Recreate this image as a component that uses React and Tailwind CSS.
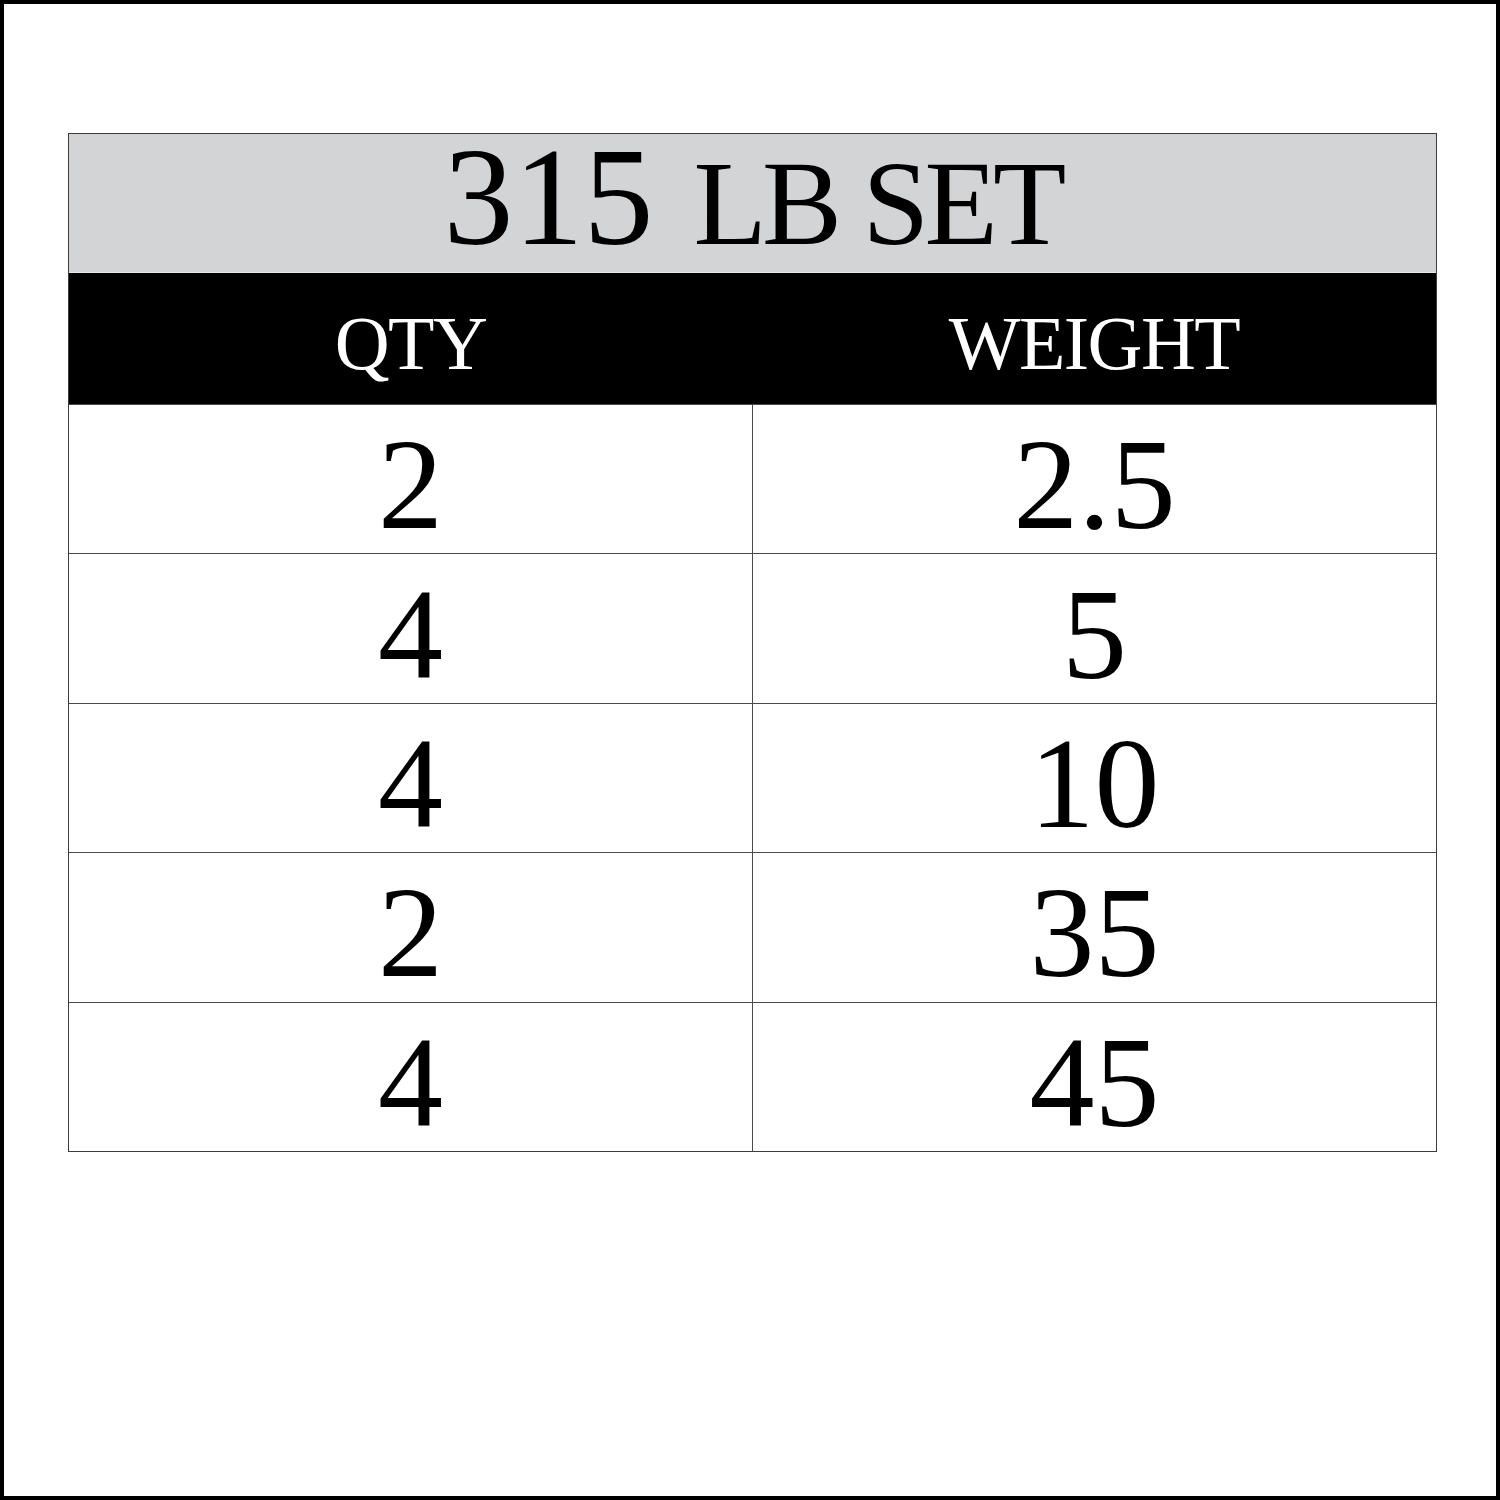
// Plate set table - 315 lb
const rows = [
  { qty: "2", weight: "2.5" },
  { qty: "4", weight: "5" },
  { qty: "4", weight: "10" },
  { qty: "2", weight: "35" },
  { qty: "4", weight: "45" },
];

export default function App() {
  return (
    <div className="w-[1500px] h-[1500px] bg-white border-[4px] border-black pt-[129px] pl-[64px] font-['Liberation_Serif',serif] text-black">
      <div className="w-[1369px] border border-[#3c3c3c]">
        {/* Title */}
        <div className="h-[139px] bg-[#d3d4d6] flex items-center justify-center pb-[12px] border-b border-[#e8e8e8]">
          <div className="flex items-baseline leading-none">
            <span className="text-[140px]">315</span>
            <span className="text-[120px] ml-[40px] tracking-[-0.04em]">LB SET</span>
          </div>
        </div>

        {/* Column headers */}
        <div className="h-[131px] bg-black text-white grid grid-cols-[683px_1fr] pt-[9px]">
          <div className="flex items-center justify-center text-[76px] leading-none tracking-[-0.02em]">QTY</div>
          <div className="flex items-center justify-center text-[76px] leading-none tracking-[-0.02em]">WEIGHT</div>
        </div>

        {/* Rows */}
        {rows.map((row, i) => (
          <div key={i} className="h-[149.4px] border-t border-[#4a4a4a] grid grid-cols-[683px_1fr]">
            <div className="flex items-center justify-center pt-[10px] text-[130px] leading-none">{row.qty}</div>
            <div className="flex items-center justify-center pt-[10px] text-[130px] leading-none border-l border-[#4a4a4a]">{row.weight}</div>
          </div>
        ))}
      </div>
    </div>
  );
}
